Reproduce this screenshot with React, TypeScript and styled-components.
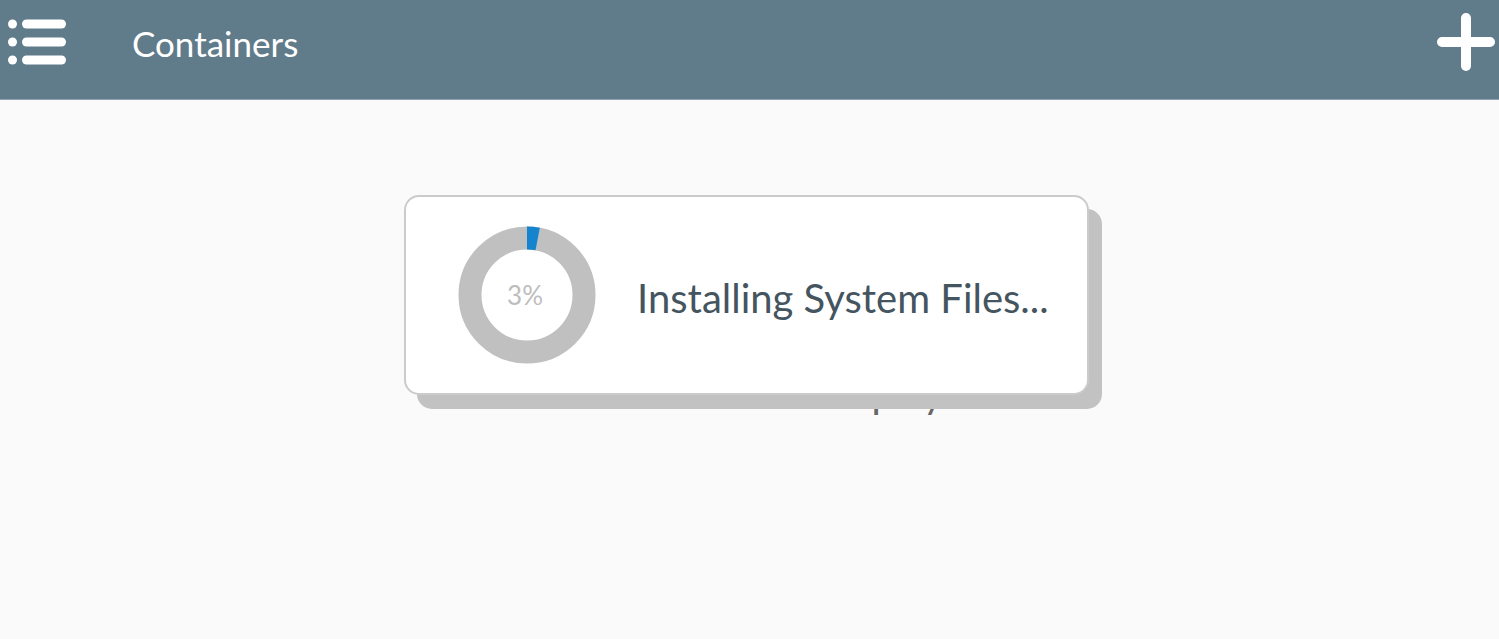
import * as React from 'react';
import styled, { createGlobalStyle } from 'styled-components';

const GlobalStyle = createGlobalStyle`
  html, body {
    margin: 0;
    padding: 0;
    background: #fafafa;
    font-family: Lato, "Open Sans", sans-serif;
  }
`;

const Page = styled.div`
  width: 1499px;
  height: 639px;
  position: relative;
  overflow: hidden;
  background: #fafafa;
`;

const Toolbar = styled.header`
  height: 100px;
  background: #607c8b;
  border-bottom: 1px solid #8fa3ae;
  display: flex;
  align-items: center;
  padding: 0 4px 0 8px;
  box-sizing: border-box;
`;

const Title = styled.h1`
  margin: 0 0 0 64px;
  flex: 1;
  font-weight: 400;
  font-size: 35px;
  color: #ffffff;
  padding-bottom: 14px;
`;

const IconButton = styled.button<{ $lift: number }>`
  border: 0;
  background: none;
  padding: 0;
  display: flex;
  margin-bottom: ${p => p.$lift}px;
`;

const Content = styled.main`
  display: flex;
  justify-content: center;
  padding: 269px 36px 0 0;
`;

const EmptyText = styled.div`
  font-size: 40px;
  color: #666;
`;

const Overlay = styled.div`
  position: absolute;
  left: 404px;
  top: 195px;
`;

const Card = styled.div`
  width: 685px;
  height: 200px;
  box-sizing: border-box;
  background: #fff;
  border: 2px solid #cbcbcb;
  border-radius: 15px;
  box-shadow: 13px 14px 0 #c2c2c2;
  display: flex;
  align-items: center;
  padding-left: 52px;
  gap: 41px;
`;

const Donut = styled.div`
  position: relative;
  width: 138px;
  height: 138px;
`;

const Percent = styled.span`
  position: absolute;
  inset: 0;
  display: flex;
  align-items: center;
  justify-content: center;
  font-size: 26px;
  color: #bdbdbd;
  padding-right: 4px;
`;

const Message = styled.div`
  font-size: 40px;
  color: #45555f;
  padding-top: 5px;
`;

const MenuIcon = () => (
  <svg width="60" height="48" viewBox="0 0 60 48">
    {[6, 24, 42].map(y => (
      <g key={y} fill="#fff">
        <circle cx="4.5" cy={y} r="4.5" />
        <rect x="14" y={y - 4.5} width="44" height="9" rx="4.5" />
      </g>
    ))}
  </svg>
);

const PlusIcon = () => (
  <svg width="58" height="58" viewBox="0 0 58 58">
    <path d="M29 5v48M5 29h48" stroke="#fff" strokeWidth="10" strokeLinecap="round" />
  </svg>
);

const Progress = ({ value }: { value: number }) => {
  const r = 57;
  const c = 2 * Math.PI * r;
  return (
    <Donut>
      <svg width="138" height="138" viewBox="0 0 138 138">
        <circle cx="69" cy="69" r={r} fill="none" stroke="#c0c0c0" strokeWidth="23" />
        <circle
          cx="69"
          cy="69"
          r={r}
          fill="none"
          stroke="#1584cf"
          strokeWidth="23"
          strokeDasharray={`${(c * value) / 100} ${c}`}
          transform="rotate(-90 69 69)"
        />
      </svg>
      <Percent>{value}%</Percent>
    </Donut>
  );
};

export default function App() {
  return (
    <Page>
      <GlobalStyle />
      <Toolbar>
        <IconButton $lift={15}><MenuIcon /></IconButton>
        <Title>Containers</Title>
        <IconButton $lift={16}><PlusIcon /></IconButton>
      </Toolbar>
      <Content>
        <EmptyText>No containers to display</EmptyText>
      </Content>
      <Overlay>
        <Card>
          <Progress value={3} />
          <Message>Installing System Files...</Message>
        </Card>
      </Overlay>
    </Page>
  );
}
